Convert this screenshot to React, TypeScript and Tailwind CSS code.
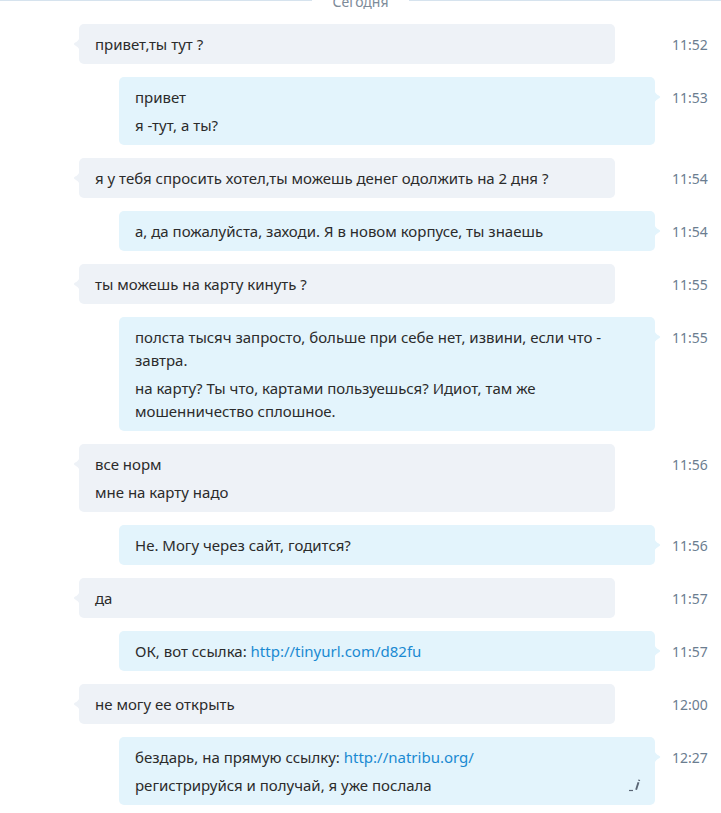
import React from 'react';

type Part = { text: string; link?: string };
interface Msg {
  out: boolean;
  time: string;
  lines: Part[][];
  edited?: boolean;
}

const messages: Msg[] = [
  { out: false, time: '11:52', lines: [[{ text: 'привет,ты тут ?' }]] },
  { out: true, time: '11:53', lines: [[{ text: 'привет' }], [{ text: 'я -тут, а ты?' }]] },
  { out: false, time: '11:54', lines: [[{ text: 'я у тебя спросить хотел,ты можешь денег одолжить на 2 дня ?' }]] },
  { out: true, time: '11:54', lines: [[{ text: 'а, да пожалуйста, заходи. Я в новом корпусе, ты знаешь' }]] },
  { out: false, time: '11:55', lines: [[{ text: 'ты можешь на карту кинуть ?' }]] },
  {
    out: true,
    time: '11:55',
    lines: [
      [{ text: 'полста тысяч запросто, больше при себе нет, извини, если что - завтра.' }],
      [{ text: 'на карту? Ты что, картами пользуешься? Идиот, там же мошенничество сплошное.' }],
    ],
  },
  { out: false, time: '11:56', lines: [[{ text: 'все норм' }], [{ text: 'мне на карту надо' }]] },
  { out: true, time: '11:56', lines: [[{ text: 'Не. Могу через сайт, годится?' }]] },
  { out: false, time: '11:57', lines: [[{ text: 'да' }]] },
  { out: true, time: '11:57', lines: [[{ text: 'ОК, вот ссылка: ' }, { text: 'http://tinyurl.com/d82fu', link: '#' }]] },
  { out: false, time: '12:00', lines: [[{ text: 'не могу ее открыть' }]] },
  {
    out: true,
    time: '12:27',
    edited: true,
    lines: [
      [{ text: 'бездарь, на прямую ссылку: ' }, { text: 'http://natribu.org/', link: '#' }],
      [{ text: 'регистрируйся и получай, я уже послала' }],
    ],
  },
];

const Tail = ({ out }: { out: boolean }) => (
  <svg
    width="7"
    height="16"
    viewBox="0 0 7 16"
    className={out ? 'absolute -right-[6px] top-[12px]' : 'absolute -left-[6px] top-[12px]'}
  >
    {out ? (
      <path d="M0 0 C1 4 2 5 5.5 7 Q7 8 5.5 9 C2 11 1 12 0 16 Z" fill="#e3f4fc" />
    ) : (
      <path d="M7 0 C6 4 5 5 1.5 7 Q0 8 1.5 9 C5 11 6 12 7 16 Z" fill="#eef2f7" />
    )}
  </svg>
);

const EditedIcon = () => (
  <svg width="12" height="14" viewBox="0 0 12 14" className="absolute right-[14px] bottom-[13px]">
    <path d="M0 12.5 H4" stroke="#5a6675" strokeWidth="1.2" />
    <path d="M6.2 11.5 L8.6 4 L10.4 4.6 L8 12 Z" fill="#5a6675" />
    <path d="M9 2.6 L9.4 1.5 L11.2 2.1 L10.8 3.2 Z" fill="#5a6675" />
  </svg>
);

export default function App() {
  return (
    <div
      className="w-[721px] h-[813px] overflow-hidden bg-white"
      style={{ fontFamily: '"Noto Sans", "Open Sans", sans-serif' }}
    >
      <div className="relative h-[24px]">
        <div className="absolute top-0 left-0 right-0 h-px bg-[#d6e3ee]" />
        <div className="absolute -top-[8px] left-0 right-0 flex justify-center">
          <span className="bg-white px-[20px] text-[14px] leading-[20px] text-[#7d8b99]">Сегодня</span>
        </div>
      </div>

      <div className="flex flex-col gap-[13px]">
        {messages.map((m, i) => (
          <div key={i} className="flex items-start">
            <div className="w-[672px] shrink-0">
              <div
                className={
                  m.out
                    ? 'relative ml-[119px] w-[536px] rounded-[5px] bg-[#e3f4fc] pl-[16px] pr-[24px] pt-[9px] pb-[8px]'
                    : 'relative ml-[79px] w-[536px] rounded-[5px] bg-[#eef2f7] pl-[16px] pr-[24px] pt-[9px] pb-[8px]'
                }
              >
                <Tail out={m.out} />
                <div className="flex flex-col gap-[5px] text-[15px] leading-[23px] text-[#2b2b2b]">
                  {m.lines.map((line, j) => (
                    <p key={j}>
                      {line.map((part, k) =>
                        part.link ? (
                          <a key={k} href={part.link} className="text-[#1a8ad2]">
                            {part.text}
                          </a>
                        ) : (
                          <span key={k}>{part.text}</span>
                        )
                      )}
                    </p>
                  ))}
                </div>
                {m.edited && <EditedIcon />}
              </div>
            </div>
            <div className="pt-[9px] text-[14px] leading-[23px] text-[#6b7d90]">{m.time}</div>
          </div>
        ))}
      </div>
    </div>
  );
}
